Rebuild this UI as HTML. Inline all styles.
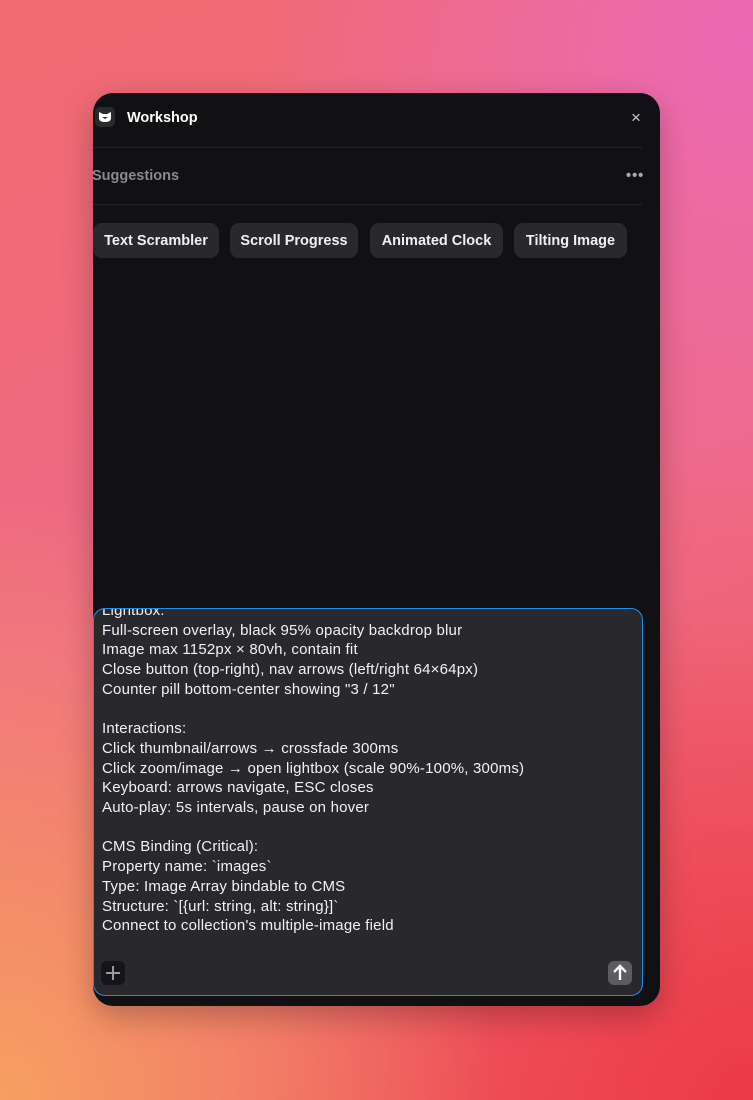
<!DOCTYPE html>
<html><head><style>
*{margin:0;padding:0;box-sizing:border-box}
body{width:753px;height:1100px;overflow:hidden;position:relative;font-family:"Liberation Sans",sans-serif;
background:
radial-gradient(ellipse 500px 500px at 750px 40px,#ec6ab5 0%,rgba(236,106,181,0) 100%),
radial-gradient(ellipse 500px 600px at 0px 1100px,#f6a062 0%,rgba(246,160,98,0) 100%),
radial-gradient(ellipse 500px 500px at 750px 1100px,#ec3a48 0%,rgba(236,58,72,0) 100%),
linear-gradient(160deg,#f06a70 0%,#ef6a86 50%,#ef5a5e 100%);}
.panel{position:absolute;left:93px;top:93px;width:567px;height:913px;background:#111113;border-radius:20px;box-shadow:0 10px 30px rgba(0,0,0,.25);overflow:hidden}
.t{position:absolute;color:#fff;font-weight:bold;font-size:14.5px;white-space:nowrap}
.hr{position:absolute;left:0;width:549px;height:1px;background:#26262a}
.chip{position:absolute;top:130px;height:35px;border-radius:9px;background:#29282c;color:#f0f0f0;font-weight:bold;font-size:14.5px;line-height:36px;text-align:center}
.ta{position:absolute;left:0;top:515px;width:550px;height:388px;border:1.5px solid #1f8ef0;border-radius:12px;background:#29282c;overflow:hidden}
.txt{position:absolute;left:8px;top:-8px;color:#f2f2f2;font-size:15px;line-height:19.7px;white-space:pre;letter-spacing:0.2px}
.btn{position:absolute;width:24px;height:24px;border-radius:6px}
</style></head><body>
<div class="panel">
  <div style="position:absolute;left:2px;top:14px;width:20px;height:20px;border-radius:5px;background:#2a2a2d"></div>
  <svg style="position:absolute;left:4px;top:16px" width="16" height="16" viewBox="0 0 16 16"><path d="M2 3 L6 5 L10 5 L14 3 L14 9 Q14 13 8 13 Q2 13 2 9Z M5 8 L11 8 L8 10Z" fill="#fff" fill-rule="evenodd"/></svg>
  <div class="t" style="left:34px;top:17px;">Workshop</div>
  <div class="t" style="left:538px;top:15px;font-size:17px;color:#ccc;font-weight:normal">×</div>
  <div class="hr" style="top:54px"></div>
  <div class="t" style="left:-1px;top:75px;color:#8a8a8e">Suggestions</div>
  <div class="t" style="left:533px;top:75px;color:#aaa;letter-spacing:1px">•••</div>
  <div class="hr" style="top:111px"></div>
  <div class="chip" style="left:0;width:126px">Text Scrambler</div>
  <div class="chip" style="left:137px;width:128px">Scroll Progress</div>
  <div class="chip" style="left:277px;width:133px">Animated Clock</div>
  <div class="chip" style="left:421px;width:113px">Tilting Image</div>
  <div class="ta">
    <div class="txt">Lightbox:
Full-screen overlay, black 95% opacity backdrop blur
Image max 1152px × 80vh, contain fit
Close button (top-right), nav arrows (left/right 64×64px)
Counter pill bottom-center showing "3 / 12"

Interactions:
Click thumbnail/arrows → crossfade 300ms
Click zoom/image → open lightbox (scale 90%-100%, 300ms)
Keyboard: arrows navigate, ESC closes
Auto-play: 5s intervals, pause on hover

CMS Binding (Critical):
Property name: `images`
Type: Image Array bindable to CMS
Structure: `[{url: string, alt: string}]`
Connect to collection's multiple-image field</div>
    <div class="btn" style="left:7px;top:352px;background:#151517"><svg width="24" height="24"><path d="M12 5v14M5 12h14" stroke="#999" stroke-width="2"/></svg></div>
    <div class="btn" style="left:514px;top:352px;background:#5c5b5f"><svg width="24" height="24"><path d="M12 19V6M6 11l6-6 6 6" stroke="#fff" stroke-width="2.4" fill="none"/></svg></div>
  </div>
</div>
</body></html>
